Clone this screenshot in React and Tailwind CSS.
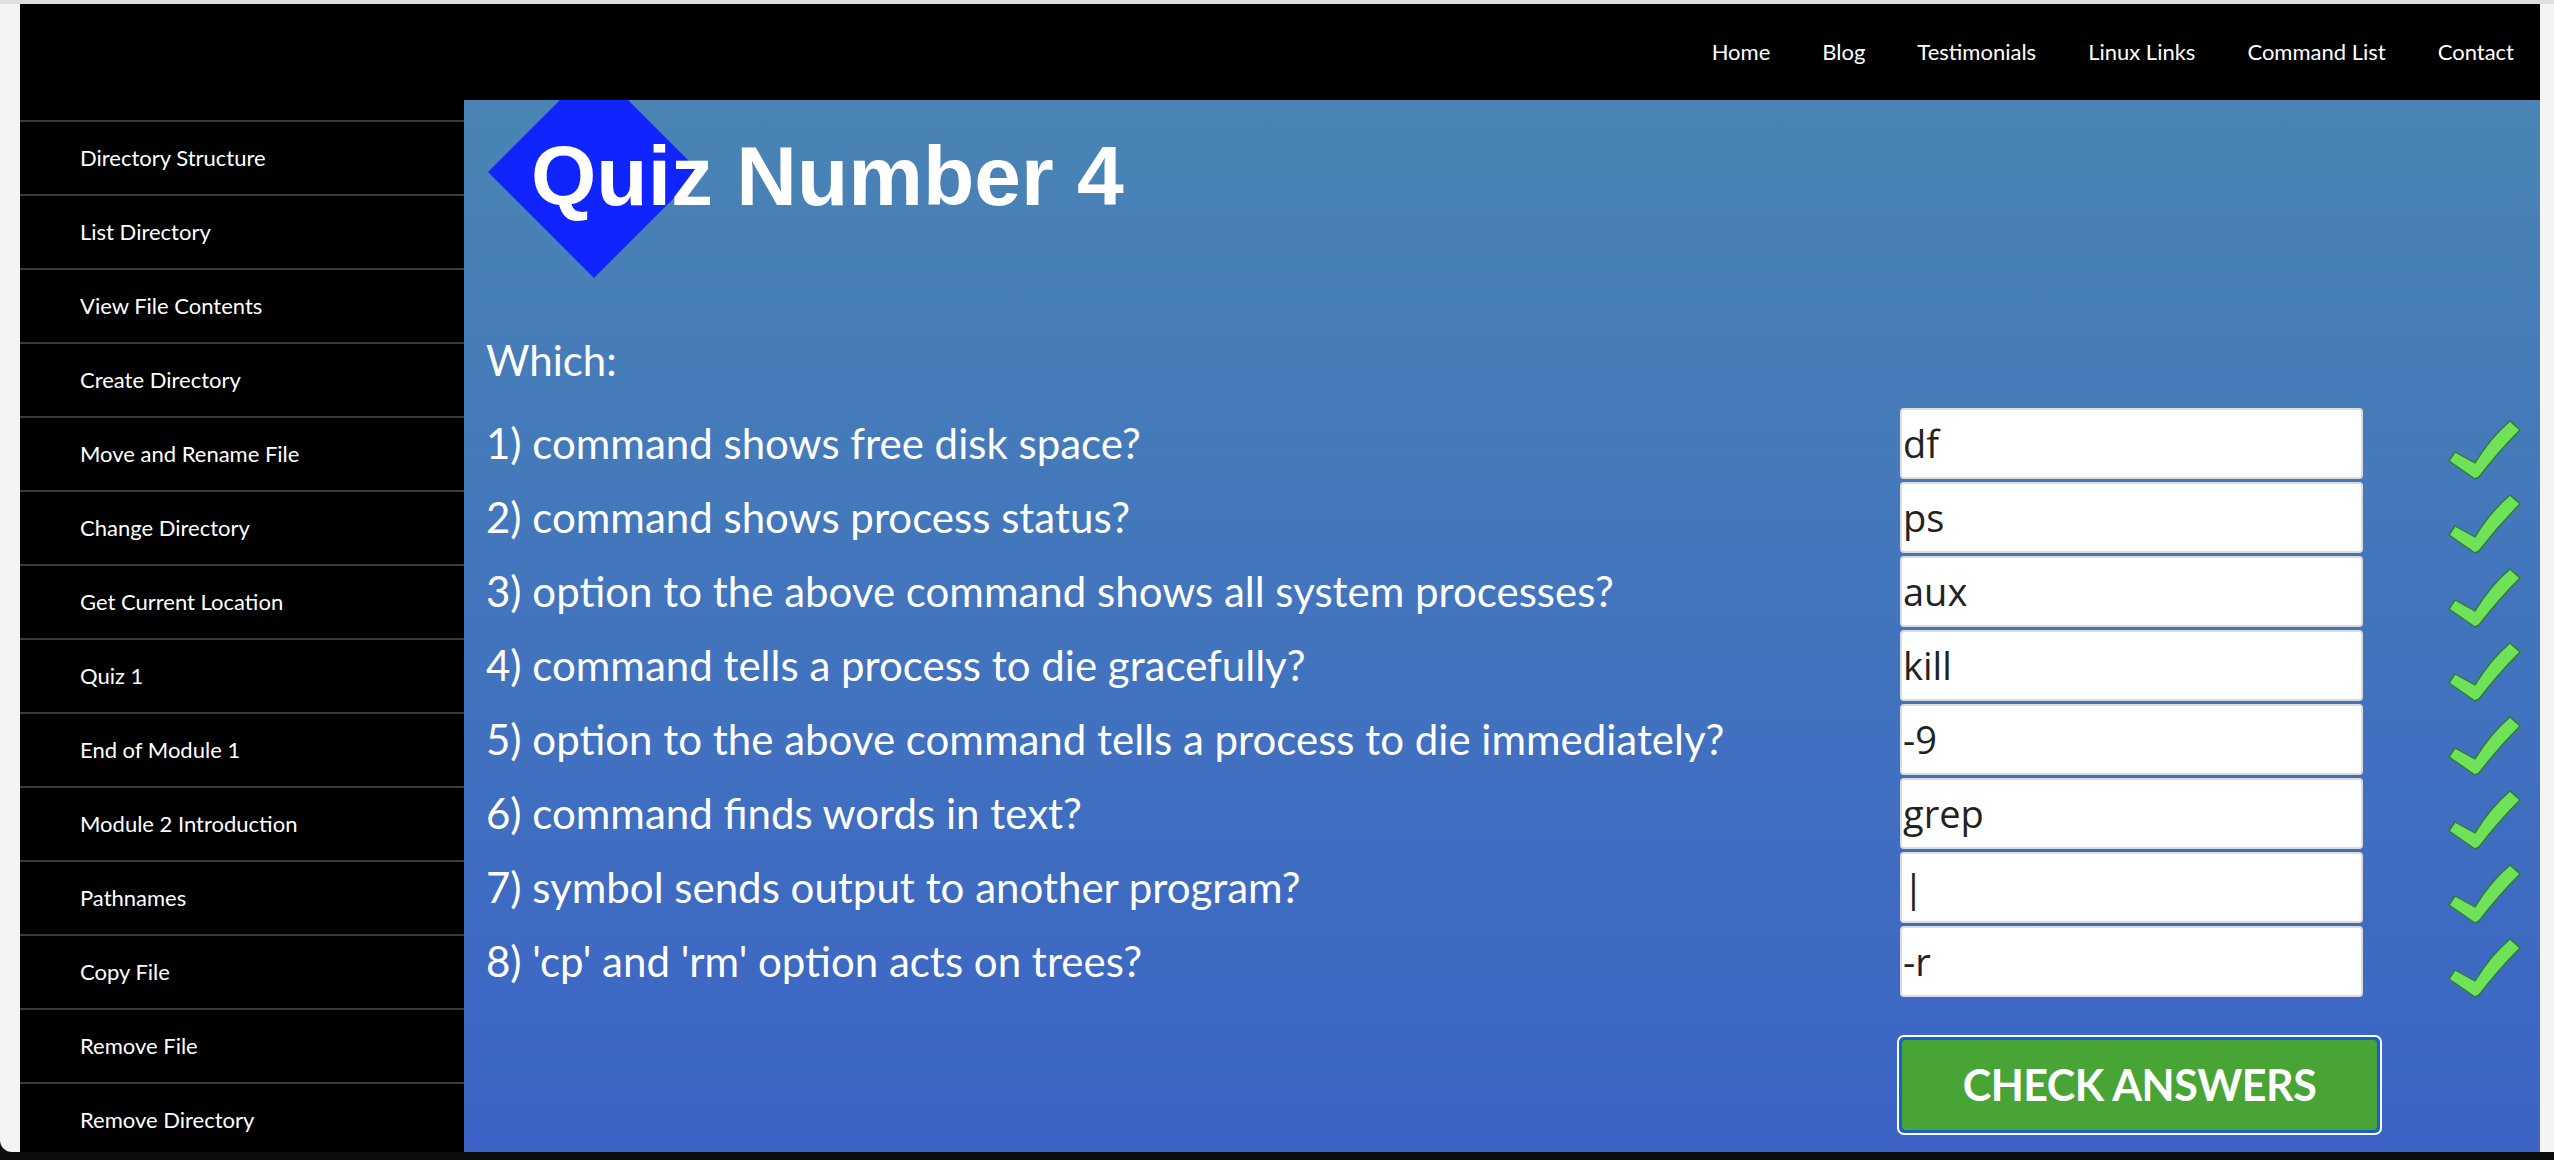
import React from "react";

const nav = ["Home", "Blog", "Testimonials", "Linux Links", "Command List", "Contact"];
const side = [
  "Directory Structure",
  "List Directory",
  "View File Contents",
  "Create Directory",
  "Move and Rename File",
  "Change Directory",
  "Get Current Location",
  "Quiz 1",
  "End of Module 1",
  "Module 2 Introduction",
  "Pathnames",
  "Copy File",
  "Remove File",
  "Remove Directory",
];
const qs = [
  ["1) command shows free disk space?", "df"],
  ["2) command shows process status?", "ps"],
  ["3) option to the above command shows all system processes?", "aux"],
  ["4) command tells a process to die gracefully?", "kill"],
  ["5) option to the above command tells a process to die immediately?", "-9"],
  ["6) command finds words in text?", "grep"],
  ["7) symbol sends output to another program?", "|"],
  ["8) 'cp' and 'rm' option acts on trees?", "-r"],
];

function Check() {
  return (
    <svg width="74" height="74" viewBox="0 0 74 74" className="shrink-0">
      <g transform="translate(0,14)">
        <path
          d="M1,41 L7,32 L27,43 Q42,18 62,1 L72,10 Q50,32 31,57 L27,59 Z"
          fill="#6fe25a"
          stroke="#2f7a34"
          strokeWidth="1.4"
          strokeLinejoin="round"
        />
      </g>
    </svg>
  );
}

export default function App() {
  return (
    <div className="w-[2554px] h-[1160px] overflow-hidden bg-[#0b0d0b] flex flex-col font-['Lato',sans-serif]">
      <div className="h-[4px] bg-[#dedee3] shrink-0" />
      <div className="flex h-[1148px] shrink-0">
        <div className="w-[20px] bg-[#f4f4f4] rounded-bl-[12px]" />
        <div className="w-[2520px] flex flex-col">
          <header className="h-[96px] shrink-0 bg-black flex items-center justify-end gap-[52px] pr-[26px] pb-[2px] text-white text-[22px]">
            {nav.map((n) => (
              <span key={n}>{n}</span>
            ))}
          </header>
          <div className="flex flex-1 min-h-0">
            <aside className="w-[444px] shrink-0 bg-black pt-[20px] overflow-hidden">
              {side.map((s) => (
                <div
                  key={s}
                  className="h-[74px] border-t-2 border-[#3a3a3a] flex items-center pl-[60px] pb-[2px] text-white text-[22px]"
                >
                  {s}
                </div>
              ))}
            </aside>
            <main className="flex-1 bg-gradient-to-b from-[#4a84b4] to-[#3c63c6] pl-[22px] pr-[20px] text-white overflow-hidden">
              <div className="relative h-[180px] -ml-[22px]">
                <svg
                  width="260"
                  height="180"
                  viewBox="0 0 260 180"
                  className="absolute left-0 top-0"
                >
                  <polygon points="24,72 130,-34 236,72 130,178" fill="#1024fe" />
                </svg>
                <div className="relative pt-[34px] pl-[67px] text-[84px] leading-none font-bold font-['Liberation_Sans',Arial,sans-serif] text-white">
                  Quiz Number 4
                </div>
              </div>
              <div className="mt-[43px] h-[74px] leading-[74px] text-[42px]">Which:</div>
              <div className="mt-[9px]">
                {qs.map(([q, a]) => (
                  <div key={q} className="h-[74px] flex items-center">
                    <div className="flex-1 min-w-0 whitespace-nowrap text-[42px] leading-[74px]">
                      {q}
                    </div>
                    <input
                      readOnly
                      value={a}
                      className="w-[463px] h-[71px] shrink-0 bg-white border-2 border-[#dcdcdc] rounded-[4px] px-[1px] text-[38px] text-[#222] font-['Open_Sans',sans-serif] outline-none"
                    />
                    <div className="ml-[85px] w-[72px] shrink-0 flex">
                      <Check />
                    </div>
                  </div>
                ))}
              </div>
              <div className="mt-[37px] flex justify-end pr-[138px]">
                <div className="w-[485px] h-[100px] rounded-[7px] border-2 border-white bg-[#1463c9] p-[3px]">
                  <div className="w-full h-full rounded-[4px] bg-[#48a535] flex items-center justify-center text-white text-[43px] font-bold tracking-[-0.5px]">
                    CHECK ANSWERS
                  </div>
                </div>
              </div>
            </main>
          </div>
        </div>
        <div className="w-[14px] bg-[#f4f4f4]" />
      </div>
      <div className="flex-1 bg-[#0b0d0b]" />
    </div>
  );
}
